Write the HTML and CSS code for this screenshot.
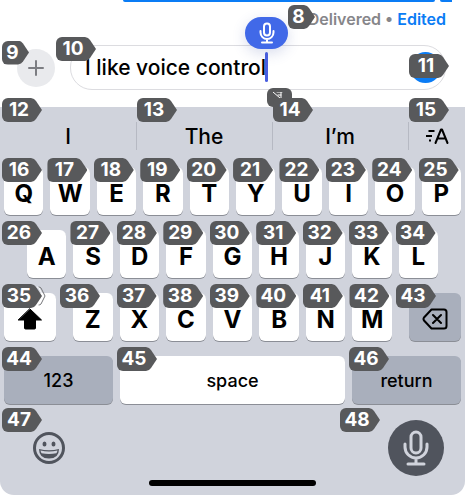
FILE: index.html
```
<!DOCTYPE html>
<html lang="en">
<head>
  <meta charset="UTF-8" />
  <meta name="viewport" content="width=device-width, initial-scale=1.0">
  <title>Messages</title>
  <link rel="stylesheet" href="styles.css">
</head>
<body>
  <main class="chat">
    <div class="bubble"></div>
    <p class="status">
      <span class="tag tag-short tag-status">8</span>
      Delivered • <a href="#">Edited</a>
    </p>

    <!-- compose bar -->
    <form class="compose">
      <button type="button" class="plus" aria-label="Add">
        <svg viewBox="0 0 16 16" width="16" height="16"><path d="M8 1v14M1 8h14" /></svg>
        <span class="tag tag-short tag-plus">9</span>
      </button>
      <div class="field">
        <input type="text" id="message" aria-label="Message" value="I like voice control">
        <span class="caret"></span>
        <span class="voice">
          <svg viewBox="0 0 18 22" width="18" height="22">
            <rect x="6" y="1.500" width="6" height="12" rx="3" />
            <path d="M2.500 9v1.500a6.500 6.500 0 0 0 13 0V9M9 17v3M4 20.500h10" />
          </svg>
        </span>
        <span class="tag tag-field">10</span>
        <button type="button" class="send" aria-label="Send"><span class="tag">11</span></button>
      </div>
    </form>
  </main>

  <section class="keyboard">
    <!-- suggestions -->
    <div class="suggestions">
      <button type="button">I<span class="tag tag-edge">12</span></button>
      <button type="button">The<span class="tag">13</span></button>
      <button type="button">I’m
        <span class="mini">
          <svg viewBox="0 0 10 8" width="10" height="8"><path d="M0 0l7 6M4 0h5M8 0v6M5 3h3" /></svg>
        </span>
        <span class="tag">14</span>
      </button>
      <button type="button" class="format" aria-label="Format">
        <svg viewBox="0 0 26 18" width="26" height="18">
          <path class="lines" d="M4.500 4h6M2 9h6M5 13.500h2" />
          <path class="letter" d="M11.500 16L17 2.500h1L23.500 16M13.500 11.500h8" />
        </svg>
        <span class="tag">15</span>
      </button>
    </div>

    <div class="keys">
      <div class="row">
        <button type="button" class="key">Q<span class="tag tag-edge">16</span></button>
        <button type="button" class="key">W<span class="tag">17</span></button>
        <button type="button" class="key">E<span class="tag">18</span></button>
        <button type="button" class="key">R<span class="tag">19</span></button>
        <button type="button" class="key">T<span class="tag">20</span></button>
        <button type="button" class="key">Y<span class="tag">21</span></button>
        <button type="button" class="key">U<span class="tag">22</span></button>
        <button type="button" class="key">I<span class="tag">23</span></button>
        <button type="button" class="key">O<span class="tag">24</span></button>
        <button type="button" class="key">P<span class="tag">25</span></button>
      </div>

      <div class="row row-middle">
        <button type="button" class="key">A<span class="tag tag-a">26</span></button>
        <button type="button" class="key">S<span class="tag">27</span></button>
        <button type="button" class="key">D<span class="tag">28</span></button>
        <button type="button" class="key">F<span class="tag">29</span></button>
        <button type="button" class="key">G<span class="tag">30</span></button>
        <button type="button" class="key">H<span class="tag">31</span></button>
        <button type="button" class="key">J<span class="tag">32</span></button>
        <button type="button" class="key">K<span class="tag">33</span></button>
        <button type="button" class="key">L<span class="tag">34</span></button>
      </div>

      <div class="row row-bottom">
        <button type="button" class="key key-side" aria-label="Shift">
          <svg class="shift" viewBox="0 0 26 22" width="26" height="22"><path d="M13 1L24.500 12h-6v8q0 1-1 1h-9q-1 0-1-1v-8h-6z" /></svg>
          <span class="tag tag-edge">35</span>
          <svg class="more" viewBox="0 0 10 20" width="10" height="20"><path d="M1 1q1 0 2 1l4 8-4 8q-1 1-2 1" /><path class="shade" d="M3 1q1 0 2 1l4 8-4 8q-1 1-2 1" /></svg>
        </button>
        <div class="letters">
          <button type="button" class="key">Z<span class="tag tag-out">36</span></button>
          <button type="button" class="key">X<span class="tag">37</span></button>
          <button type="button" class="key">C<span class="tag">38</span></button>
          <button type="button" class="key">V<span class="tag">39</span></button>
          <button type="button" class="key">B<span class="tag">40</span></button>
          <button type="button" class="key">N<span class="tag">41</span></button>
          <button type="button" class="key">M<span class="tag">42</span></button>
        </div>
        <button type="button" class="key key-side key-gray" aria-label="Delete">
          <svg viewBox="0 0 26 22" width="26" height="22"><path d="M9.500 1.500H22a2.500 2.500 0 0 1 2.500 2.500v14a2.500 2.500 0 0 1-2.500 2.500H9.500L2 12.500q-1-1.500 0-3zM11 7l8 8M19 7l-8 8" /></svg>
          <span class="tag tag-out">43</span>
        </button>
      </div>

      <div class="row row-space">
        <button type="button" class="key key-gray">123<span class="tag tag-edge">44</span></button>
        <button type="button" class="key">space<span class="tag">45</span></button>
        <button type="button" class="key key-gray">return<span class="tag">46</span></button>
      </div>
    </div>

    <div class="dock">
      <button type="button" class="emoji" aria-label="Emoji">
        <svg viewBox="0 0 32 32" width="32" height="32">
          <circle class="face" cx="16" cy="16" r="14.500" />
          <ellipse cx="11.500" cy="12" rx="2" ry="2.500" />
          <ellipse cx="20.500" cy="12" rx="2" ry="2.500" />
          <path d="M6 17q10 2.500 20 0q0 9.500-10 9.500t-10-9.500z" />
          <path class="teeth" d="M7.500 18.500q8.500 2 17 0q-.3 1.700-1.100 2.700q-7.400 1.600-14.800 0q-.8-1-1.100-2.700z" />
        </svg>
        <span class="tag tag-emoji">47</span>
      </button>
      <button type="button" class="dictate" aria-label="Dictate">
        <svg viewBox="0 0 26 36" width="26" height="36">
          <rect x="8" y="2" width="10" height="21" rx="5" />
          <path d="M2 14v3a11 11 0 0 0 22 0v-3M13 28v5M5 34h16" />
        </svg>
        <span class="tag tag-dictate">48</span>
      </button>
    </div>
    <div class="home"></div>
  </section>
</body>
</html>
```
FILE: styles.css
```
* {
  box-sizing: border-box;
}
body {
  margin: 0;
  min-height: 100vh;
  display: flex;
  flex-direction: column;
  background: #fff;
  color: #000;
  font-family: Inter, "Liberation Sans", sans-serif;
}
button {
  position: relative;
  padding: 0;
  border: none;
  background: none;
  color: inherit;
  font-family: inherit;
  cursor: pointer;
}
svg {
  display: block;
  fill: none;
  stroke: currentColor;
  stroke-width: 2;
  stroke-linecap: round;
  stroke-linejoin: round;
}

/* number tags */
.tag {
  position: absolute;
  z-index: 2;
  top: -9px;
  left: -3px;
  width: 40px;
  height: 24px;
  padding-right: 6px;
  background: #58595b;
  border-radius: 6px 0 0 6px;
  clip-path: polygon(0 0, 29px 0, 32px 1px, 34px 3px, 100% 50%, 34px 21px, 32px 23px, 29px 100%, 0 100%);
  color: #fff;
  font-size: 19px;
  font-weight: 700;
  line-height: 24px;
  text-align: center;
}
.tag-short {
  width: 27px;
  clip-path: polygon(0 0, 16px 0, 19px 1px, 21px 3px, 100% 50%, 21px 21px, 19px 23px, 16px 100%, 0 100%);
}
.tag-edge {
  left: -2px;
}
.tag-a {
  left: -25px;
}
.tag-out {
  left: -13px;
}

/* conversation */
.chat {
  height: 107px;
}
.bubble {
  position: relative;
  height: 2px;
  margin: 0 30px 0 123px;
  background: #0a7cf5;
  border-radius: 0 0 10px 10px;
}
.bubble::after {
  content: "";
  position: absolute;
  top: 0;
  right: -17px;
  width: 12px;
  height: 2px;
  background: #0a7cf5;
  border-radius: 0 0 0 10px;
}
.status {
  position: relative;
  margin: 0;
  padding: 7px 19px 0;
  color: #86868a;
  font-size: 16px;
  font-weight: 600;
  line-height: 20px;
  text-align: right;
}
.status a {
  color: #0a7cf5;
  text-decoration: none;
}
.tag-status {
  top: 3px;
  left: auto;
  right: 150px;
}
.compose {
  display: flex;
  align-items: center;
  gap: 15px;
  padding: 16px 19px 0 17px;
}
.plus {
  display: flex;
  align-items: center;
  justify-content: center;
  width: 38px;
  height: 38px;
  background: #e9eaed;
  border-radius: 50%;
  color: #7c7d82;
}
.tag-plus {
  top: -8px;
  left: -15px;
}
.field {
  position: relative;
  flex: 1;
}
.field input {
  display: block;
  width: 100%;
  height: 45px;
  padding: 0 56px 0 14px;
  border: 1px solid #dcdce0;
  border-radius: 22px;
  background: #fff;
  color: #000;
  font-family: inherit;
  font-size: 21px;
  font-weight: 500;
}
.caret {
  position: absolute;
  top: 7px;
  left: 195px;
  width: 3px;
  height: 30px;
  background: #4a5fe0;
  border-radius: 2px;
}
.voice {
  position: absolute;
  top: -28px;
  left: 175px;
  display: flex;
  align-items: center;
  justify-content: center;
  width: 43px;
  height: 32px;
  background: #4169e8;
  border-radius: 16px;
  box-shadow: 0 4px 14px rgba(60,80,160,0.2);
  color: #fff;
}
.tag-field {
  top: -8px;
  left: -14px;
}
.send {
  position: absolute;
  top: 7px;
  right: 5px;
  width: 31px;
  height: 31px;
  background: #0a7cf5;
  border-radius: 50%;
}
.send .tag {
  top: 2px;
  left: -1px;
}

/* keyboard */
.keyboard {
  flex: 1;
  background: #d0d3dc;
  border-radius: 0 0 14px 14px;
}
.suggestions {
  display: grid;
  grid-template-columns: 136fr 136fr 136fr 57fr;
  height: 60px;
}
.suggestions button {
  height: 58px;
  font-size: 21px;
  font-weight: 500;
}
.suggestions button + button::before {
  content: "";
  position: absolute;
  top: 15px;
  left: 0;
  width: 1px;
  height: 28px;
  background: #b6b9c3;
}
.suggestions .tag {
  left: 1px;
}
.suggestions .tag-edge {
  left: 2px;
}
.mini {
  position: absolute;
  top: -19px;
  left: -5px;
  width: 25px;
  height: 19px;
  padding: 4px 6px;
  background: #58595b;
  border-radius: 6px;
  color: #fff;
}
.mini svg {
  stroke-width: 1;
}
.format svg {
  margin: 0 auto;
}
.format .lines {
  stroke-width: 2;
  stroke-linecap: butt;
}
.format .letter {
  stroke-width: 2;
}

.keys {
  display: flex;
  flex-direction: column;
  gap: 15px;
  padding: 0 4px;
}
.row, .letters {
  display: flex;
  gap: 7px;
}
.row-middle {
  padding: 0 23px;
}
.row-bottom {
  gap: 17px;
}
.letters {
  flex: 1;
}
.key {
  flex: 1;
  height: 48px;
  padding-top: 4px;
  background: #fff;
  border-radius: 6px;
  box-shadow: 0 1px 0 #8b8e96;
  font-size: 24px;
  font-weight: 700;
}
.key-side {
  flex: none;
  width: 52px;
}
.key-gray {
  background: #a9afbc;
}
.key svg {
  margin: 0 auto;
}
.shift {
  fill: #000;
  stroke-width: 1;
}
.key .more {
  position: absolute;
  z-index: 3;
  top: -7px;
  left: 32px;
  color: #fff;
  stroke-width: 1;
}
.more .shade {
  stroke: #77787b;
}
.row-space {
  display: grid;
  grid-template-columns: 109fr 225fr 109fr;
}
.row-space .key {
  padding-top: 0;
  font-size: 18px;
  font-weight: 500;
}

.dock {
  display: flex;
  align-items: center;
  justify-content: space-between;
  padding: 16px 21px 0 33px;
}
.emoji {
  color: #50545d;
}
.emoji svg {
  fill: currentColor;
  stroke: none;
}
.emoji .face {
  fill: none;
  stroke: currentColor;
  stroke-width: 3;
}
.emoji .teeth {
  fill: #d0d3dc;
}
.tag-emoji {
  top: -24px;
  left: -31px;
}
.dictate {
  display: flex;
  align-items: center;
  justify-content: center;
  width: 56px;
  height: 56px;
  background: #50545d;
  border-radius: 50%;
  color: #d0d3dc;
}
.dictate svg {
  stroke-width: 3;
}
.tag-dictate {
  top: -12px;
  left: -48px;
}
.home {
  width: 36%;
  height: 6px;
  margin: 4px auto 0;
  background: #000;
  border-radius: 3px;
}
```
